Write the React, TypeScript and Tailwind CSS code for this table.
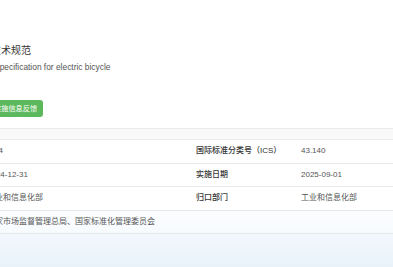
const rows = [
  { l1: "中国标准分类号（CCS）", v1: "T 84", l2: "国际标准分类号（ICS）", v2: "43.140" },
  { l1: "发布日期", v1: "2024-12-31", l2: "实施日期", v2: "2025-09-01" },
  { l1: "主管部门", v1: "工业和信息化部", l2: "归口部门", v2: "工业和信息化部" },
];

export default function App() {
  return (
    <div
      className="h-[267px] w-[393px] overflow-hidden bg-[linear-gradient(to_bottom,#ffffff_0px,#ffffff_190px,#e9f2fa_267px)]"
      style={{ fontFamily: '"Liberation Sans", "Noto Sans CJK SC", sans-serif' }}
    >
      <div className="-ml-[77px] pt-[45px]">
        <h1 className="-ml-[2px] text-[10px] leading-[12px] text-[#333]">电动自行车安全技术规范</h1>
        <p className="mt-[5px] pl-[11px] text-[8.4px] leading-[10px] text-[#555]">
          Safety technical specification for electric bicycle
        </p>
        <button className="mt-[28px] ml-[65px] block h-[17px] rounded-[3px] bg-[#5cb85c] px-[6px] text-[7.2px] leading-[17px] text-white">
          实施信息反馈
        </button>
      </div>

      <div className="mt-[11px] -ml-[123px] w-[600px]">
        <div className="h-[12px] border-y border-[#ececec] bg-[#f9f9f9]" />
        {rows.map((r) => (
          <div
            key={r.l1}
            className="grid h-[23.5px] grid-cols-[100px_209px_105px_1fr] items-center border-b border-[#e8e8e8] bg-white text-[8px]"
          >
            <span className="pl-[10px] text-[#333]">{r.l1}</span>
            <span className="pl-[10px] text-[#555]">{r.v1}</span>
            <span className="pl-[10px] font-medium text-[#333]">{r.l2}</span>
            <span className="pl-[10px] text-[#555]">{r.v2}</span>
          </div>
        ))}
        <div className="grid h-[23.5px] grid-cols-[100px_1fr] items-center border-b border-[#e4e8ec] bg-white/40 text-[8px]">
          <span className="pl-[10px] text-[#333]">发布单位</span>
          <span className="pl-[10px] text-[#555]">国家市场监督管理总局、国家标准化管理委员会</span>
        </div>
      </div>
    </div>
  );
}
